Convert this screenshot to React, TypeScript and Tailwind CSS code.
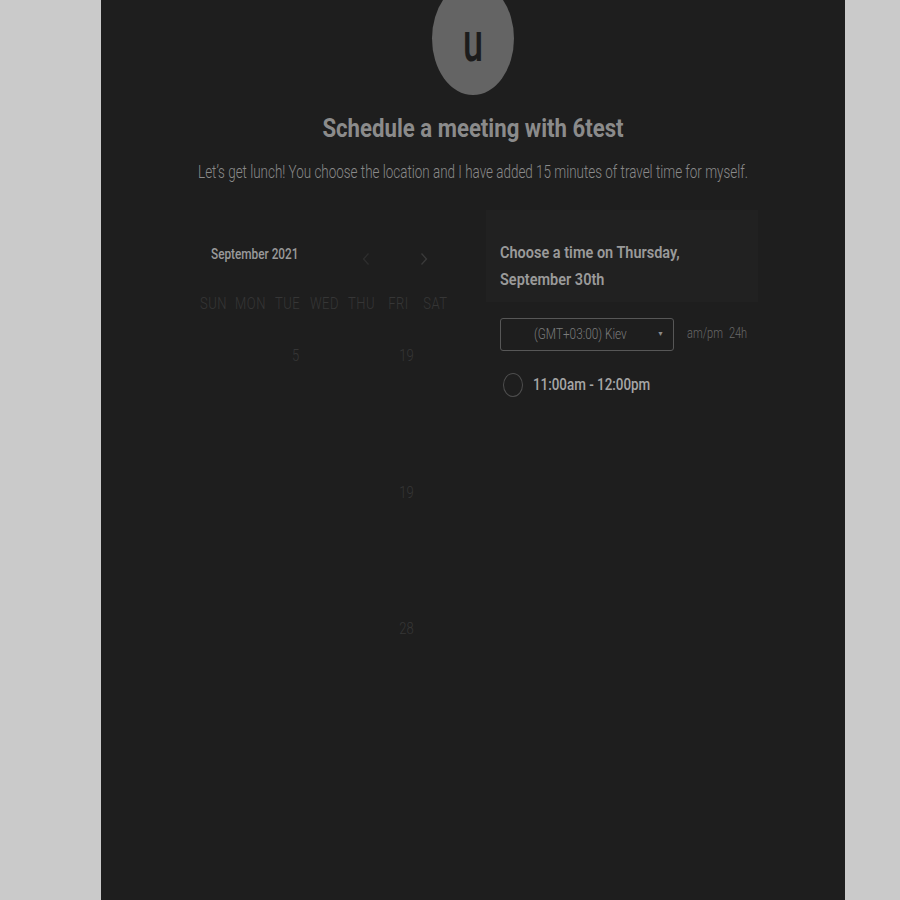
import React from "react";

const headers = ["SUN", "MON", "TUE", "WED", "THU", "FRI", "SAT"];

// rows of the calendar: each item is [columnIndex, label]
const rows: Array<Array<[number, string]>> = [
  [[2, "5"], [5, "19"]],
  [],
  [],
  [[5, "19"]],
  [],
  [],
  [[5, "28"]],
];

export default function App() {
  return (
    <div className="w-full h-[900px] overflow-hidden bg-[#cacaca] font-['Roboto','Liberation_Sans',sans-serif]">
      <div className="ml-[101px] w-[744px] h-[900px] bg-[#1e1e1e] flex flex-col items-center overflow-hidden">
        {/* avatar */}
        <div className="-mt-[18px] w-[82px] h-[113px] shrink-0 rounded-[50%] bg-[#646464] flex items-center justify-center">
          <span className="mt-[6px] text-[36px] leading-none font-medium text-[#1c1c1c] scale-y-[1.55] inline-block">
            u
          </span>
        </div>

        {/* title */}
        <h1 className="mt-[19px] h-[28px] leading-[28px] text-[22.2px] font-bold text-[#8b8b8b] scale-y-[1.12]">
          Schedule a meeting with 6test
        </h1>

        {/* description */}
        <p className="mt-[21px] h-[20px] leading-[20px] text-[13.45px] font-light text-[#8a8a8a] scale-y-[1.3]">
          Let’s get lunch! You choose the location and I have added 15 minutes of travel time for myself.
        </p>

        {/* content */}
        <div className="mt-[27px] w-full flex pl-[99px]">
          {/* calendar */}
          <div className="w-[262px] pt-[35px]">
            <div className="flex items-center h-[20px]">
              <span className="ml-[11px] text-[11.8px] font-medium text-[#9a9a9a] scale-y-[1.25] inline-block">
                September 2021
              </span>
              <div className="ml-[63px] mt-[8px] flex items-center gap-[50px]">
                <svg width="8" height="14" viewBox="0 0 8 14" fill="none">
                  <path d="M6.5 1.5 L1.5 7 L6.5 12.5" stroke="#2e2e2e" strokeWidth="1.3" />
                </svg>
                <svg width="8" height="14" viewBox="0 0 8 14" fill="none">
                  <path d="M1.5 1.5 L6.5 7 L1.5 12.5" stroke="#3a3a3a" strokeWidth="1.3" />
                </svg>
              </div>
            </div>
            <div className="mt-[28px] -ml-[5px] grid grid-cols-7 w-[259px] h-[22px] items-center">
              {headers.map((h) => (
                <span
                  key={h}
                  className="text-center text-[13px] font-light tracking-[0.5px] text-[#363636] scale-y-[1.3] inline-block"
                >
                  {h}
                </span>
              ))}
            </div>
            <div className="mt-[18px] ml-[3px] w-[259px]">
              {rows.map((r, i) => (
                <div key={i} className="grid grid-cols-7 h-[45.5px] items-center">
                  {headers.map((_, c) => {
                    const cell = r.find((x) => x[0] === c);
                    return (
                      <span
                        key={c}
                        className="text-center text-[13px] font-light text-[#363636] scale-y-[1.3] inline-block"
                      >
                        {cell ? cell[1] : ""}
                      </span>
                    );
                  })}
                </div>
              ))}
            </div>
          </div>

          {/* time picker */}
          <div className="ml-[24px] w-[272px]">
            <div className="bg-[#212121] h-[92px] pl-[14px] pt-[31px] flex flex-col">
              <span className="h-[27px] leading-[20px] text-[14.5px] font-semibold text-[#9a9a9a] scale-y-[1.2] origin-top">
                Choose a time on Thursday,
              </span>
              <span className="h-[27px] leading-[20px] text-[14.5px] font-semibold text-[#9a9a9a] scale-y-[1.2] origin-top">
                September 30th
              </span>
            </div>
            <div className="mt-[16px] ml-[14px] flex items-center">
              <div className="w-[174px] h-[33px] border border-[#575757] rounded-[3px] flex items-center">
                <span className="ml-[33px] text-[11.8px] font-light text-[#7c7c7c] scale-y-[1.25] inline-block">
                  (GMT+03:00) Kiev
                </span>
                <span className="ml-auto mr-[9px] text-[7px] text-[#8a8a8a]">▼</span>
              </div>
              <span className="ml-[13px] text-[11px] font-light text-[#686868] scale-y-[1.25] inline-block">
                am/pm
              </span>
              <span className="ml-[6px] text-[11px] font-light text-[#686868] scale-y-[1.25] inline-block">
                24h
              </span>
            </div>
            <div className="mt-[22px] ml-[17px] flex items-center">
              <div className="w-[20px] h-[24px] rounded-[50%] border border-[#4e4e4e]" />
              <span className="ml-[10px] text-[13.4px] font-medium text-[#a6a6a6] scale-y-[1.2] inline-block">
                11:00am - 12:00pm
              </span>
            </div>
          </div>
        </div>
      </div>
    </div>
  );
}
